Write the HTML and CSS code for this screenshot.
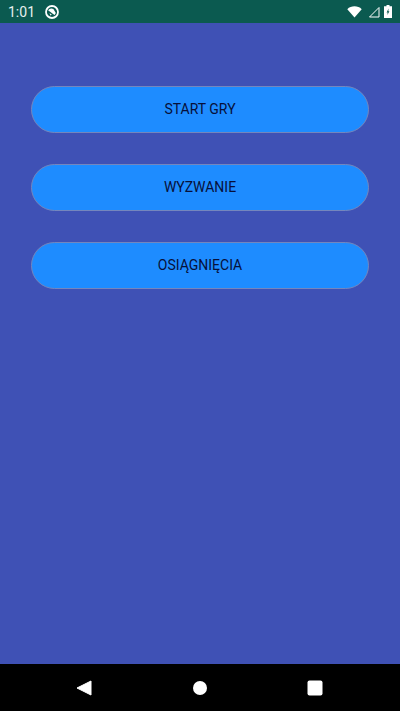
FILE: index.html
```html
<!DOCTYPE html>
<html lang="pl">
<head>
    <meta charset="UTF-8">
    <meta name="viewport" content="width=device-width, initial-scale=1.0">
    <title>Menu</title>
    <link rel="stylesheet" href="styles.css">
</head>
<body>
    <div class="status-bar">
        <div class="status-left">
            <span class="clock">1:01</span>
            <svg class="sync-icon" width="16" height="16" viewBox="0 0 16 16">
                <circle cx="8" cy="8" r="6" fill="none" stroke="#fff" stroke-width="1.8"/>
                <path d="M4.2 6.4 C5 4.4 7.6 3.8 9.4 5 L11.8 9 L10.6 11 C8.6 9.6 6.4 7.6 4.2 6.4 Z" fill="#fff"/>
                <path d="M5.5 9 L7.8 10.8 L6.4 11.4 Z" fill="#fff"/>
            </svg>
        </div>
        <div class="status-right">
            <svg width="15" height="12" viewBox="0 0 15 12">
                <path d="M0.3 3.2 C4 -0.6 11 -0.6 14.7 3.2 L7.5 11.5 Z" fill="#fff"/>
            </svg>
            <svg width="12" height="12" viewBox="0 0 12 12">
                <path d="M11 1.5 V11 H1.5 Z" fill="none" stroke="#fff" stroke-width="1"/>
            </svg>
            <svg width="8" height="13" viewBox="0 0 8 13">
                <path d="M2.5 0 H5.5 V1.2 H8 V13 H0 V1.2 H2.5 Z" fill="#fff"/>
                <path d="M4.6 3.5 L2.6 7.4 H3.7 L3.4 10 L5.4 6.2 H4.3 Z" fill="#0b5a50"/>
            </svg>
        </div>
    </div>

    <div class="menu">
        <button class="menu-button">START GRY</button>
        <button class="menu-button">WYZWANIE</button>
        <button class="menu-button">OSIĄGNIĘCIA</button>
    </div>

    <div class="nav-bar">
        <svg width="16" height="16" viewBox="0 0 16 16">
            <path d="M15 1 V15 L1 8 Z" fill="#fff" stroke="#fff" stroke-linejoin="round"/>
        </svg>
        <svg width="16" height="16" viewBox="0 0 16 16">
            <circle cx="8" cy="8" r="7" fill="#fff"/>
        </svg>
        <svg width="16" height="16" viewBox="0 0 16 16">
            <rect x="0.5" y="0.5" width="15" height="15" rx="2" fill="#fff"/>
        </svg>
    </div>
</body>
</html>
```

FILE: styles.css
```css
html, body {
    height: 100%;
}
body {
    margin: 0;
    display: flex;
    flex-direction: column;
    background-color: #3f51b5;
    font-family: Roboto, "Liberation Sans", sans-serif;
}
.status-bar {
    height: 23px;
    flex: none;
    display: flex;
    justify-content: space-between;
    align-items: center;
    padding: 0 8px;
    box-sizing: border-box;
    background-color: #0b5a50;
    color: white;
}
.status-left, .status-right {
    display: flex;
    align-items: center;
}
.status-left {
    gap: 9px;
}
.status-right {
    gap: 4px;
    padding-right: 0;
}
.status-right svg:first-child {
    margin-right: 2px;
}
.clock {
    font-size: 14px;
    color: #e6f0ee;
}
.menu {
    flex: 1;
    display: flex;
    flex-direction: column;
    gap: 31px;
    padding: 62.5px 31px 0;
}
.menu-button {
    height: 47px;
    padding: 0;
    border: 1.5px solid #7486bd;
    border-radius: 24px;
    background-color: #1e8cff;
    color: #07103a;
    font-family: inherit;
    font-size: 14px;
    font-weight: 400;
}
.nav-bar {
    height: 47px;
    flex: none;
    display: flex;
    justify-content: space-between;
    align-items: center;
    padding: 0 77px 0 76px;
    background-color: black;
}
```
